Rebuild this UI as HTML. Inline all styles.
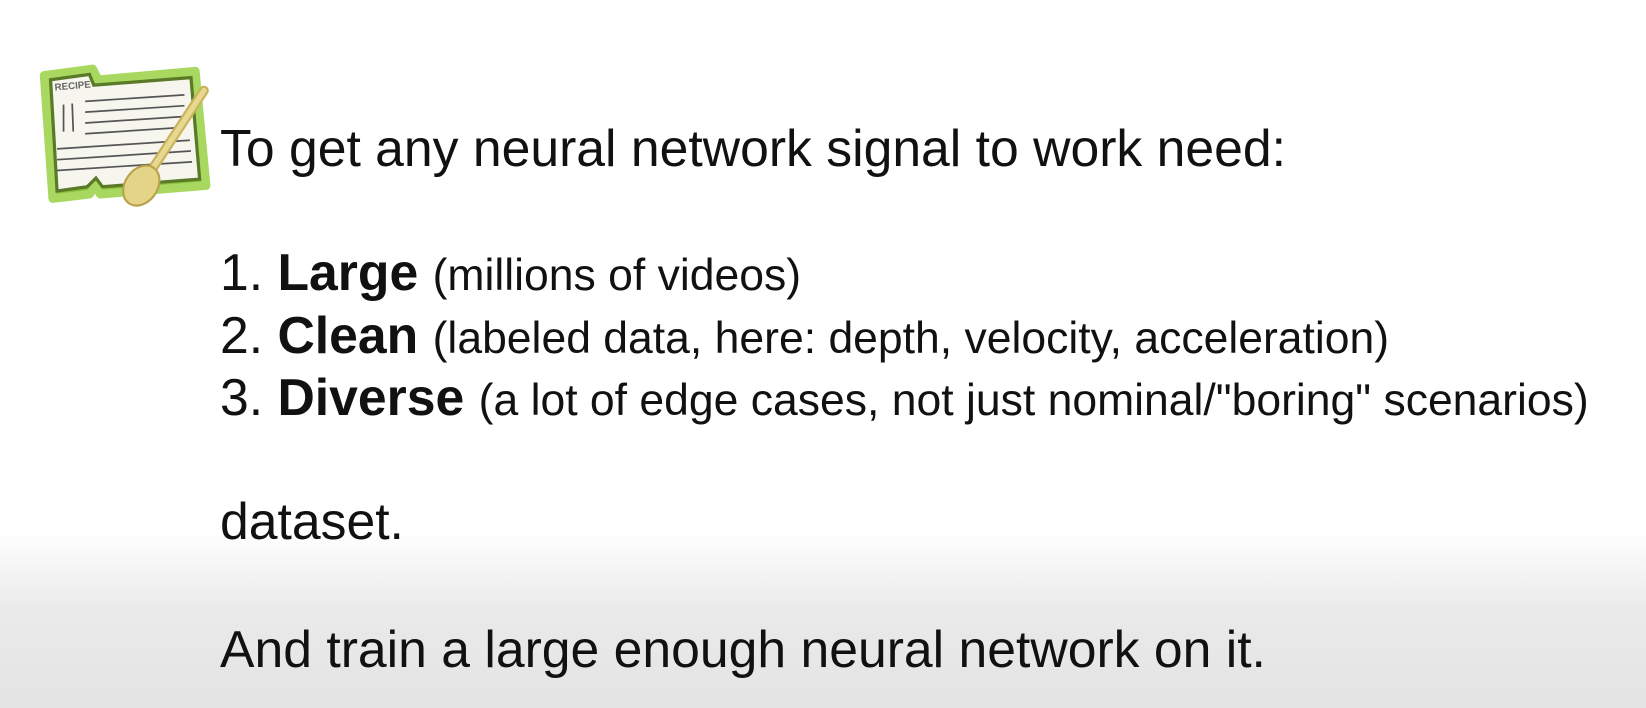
<!DOCTYPE html>
<html><head><style>
html,body{margin:0;padding:0}
body{width:1646px;height:708px;overflow:hidden;position:relative;font-family:"Liberation Sans",sans-serif;color:#111;
background:linear-gradient(to bottom,#fff 0,#fff 530px,#eaeaea 610px,#e4e4e4 708px)}
.t{position:absolute;left:220px;white-space:nowrap;font-size:51.7px;line-height:1}
.s{font-size:44.5px}
b{font-weight:bold}
</style></head><body>
<svg style="position:absolute;left:33px;top:56px" width="195" height="162" viewBox="0 0 180 150">
<path d="M10 18 L55 12 L60 22 L150 14 L160 120 L62 128 L58 120 L52 128 L18 132 Z" fill="#8cbf3c" stroke="#a8d860" stroke-width="8" stroke-linejoin="round"/>
<path d="M16 22 L52 17 L56 27 L146 20 L154 114 L64 121 L58 113 L50 121 L22 125 Z" fill="#f6f6ee" stroke="#5a7a28" stroke-width="3"/>
<text x="20" y="32" font-size="9" font-family="Liberation Sans" font-weight="bold" fill="#666" transform="rotate(-5 20 32)">RECIPE</text>
<g stroke="#555" stroke-width="1.6">
<line x1="48" y1="42" x2="140" y2="36"/><line x1="48" y1="52" x2="140" y2="46"/><line x1="48" y1="62" x2="140" y2="56"/><line x1="48" y1="72" x2="140" y2="66"/>
<line x1="22" y1="86" x2="145" y2="78"/><line x1="22" y1="96" x2="146" y2="88"/><line x1="22" y1="106" x2="147" y2="98"/>
<line x1="28" y1="45" x2="28" y2="70"/><line x1="36" y1="44" x2="37" y2="70"/>
</g>
<line x1="158" y1="32" x2="108" y2="108" stroke="#c9b25a" stroke-width="9" stroke-linecap="round"/>
<line x1="158" y1="32" x2="108" y2="108" stroke="#e6d890" stroke-width="5" stroke-linecap="round"/>
<ellipse cx="100" cy="120" rx="15" ry="20" transform="rotate(35 100 120)" fill="#e3d488" stroke="#b9a24c" stroke-width="2"/>
</svg>
<div class="t" style="top:123px">To get any neural network signal to work need:</div>
<div class="t" style="top:247px">1. <b>Large</b> <span class="s">(millions of videos)</span></div>
<div class="t" style="top:310px">2. <b>Clean</b> <span class="s">(labeled data, here: depth, velocity, acceleration)</span></div>
<div class="t" style="top:372px">3. <b>Diverse</b> <span class="s">(a lot of edge cases, not just nominal/"boring" scenarios)</span></div>
<div class="t" style="top:496px">dataset.</div>
<div class="t" style="top:624px">And train a large enough neural network on it.</div>
</body></html>
